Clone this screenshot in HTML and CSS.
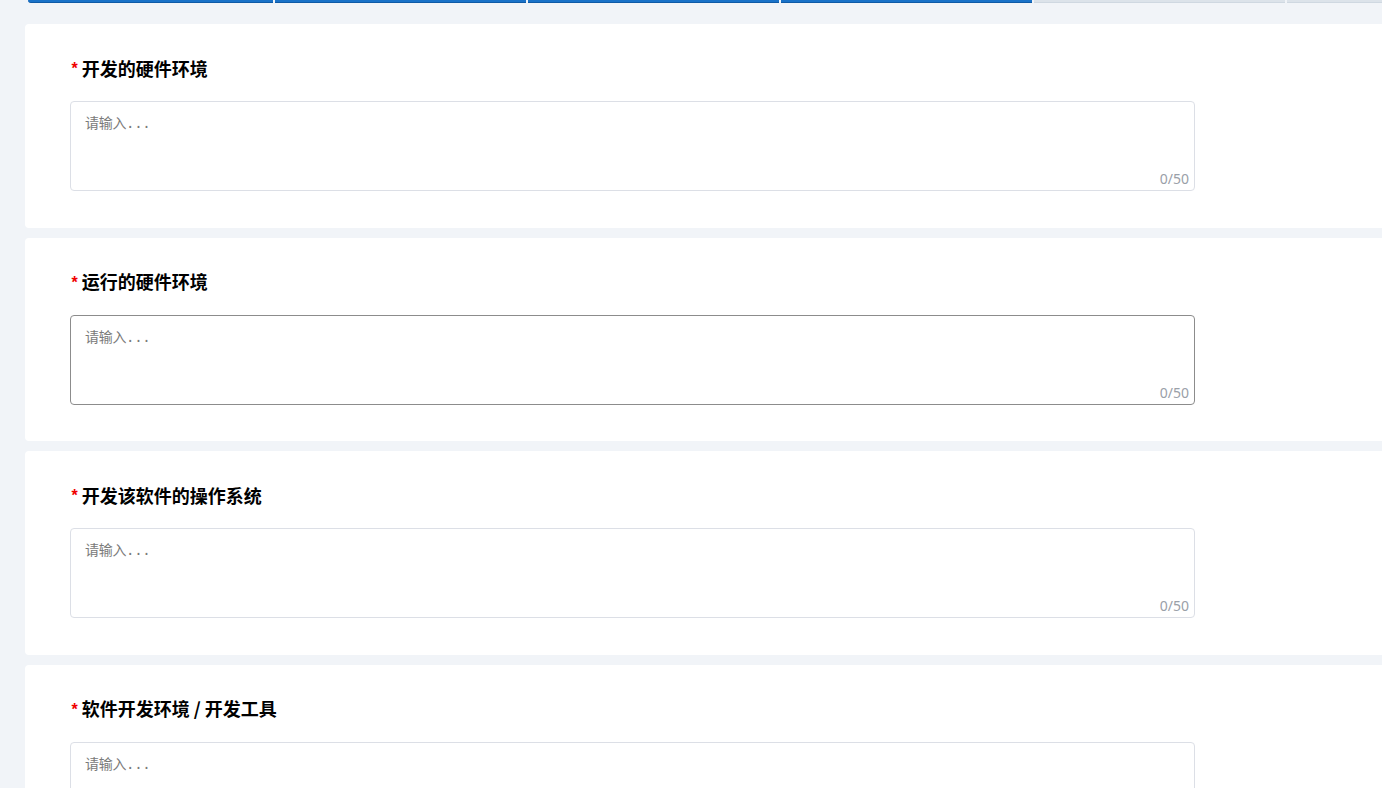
FILE: index.html
```html
<!DOCTYPE html>
<html lang="zh-CN">
<head>
<meta charset="utf-8">
<title>软件环境</title>
<link rel="stylesheet" href="styles.css">
</head>
<body>
<div class="page">
  <div class="steps">
    <div class="step done first"></div>
    <div class="step done"></div>
    <div class="step done"></div>
    <div class="step done"></div>
    <div class="step"></div>
    <div class="step"></div>
  </div>

  <section class="card">
    <div class="label"><span class="req">*</span>开发的硬件环境</div>
    <div class="field">
      <textarea class="input" placeholder="请输入..."></textarea>
      <span class="count">0/50</span>
    </div>
  </section>

  <section class="card">
    <div class="label"><span class="req">*</span>运行的硬件环境</div>
    <div class="field">
      <textarea class="input hover" placeholder="请输入..."></textarea>
      <span class="count">0/50</span>
    </div>
  </section>

  <section class="card">
    <div class="label"><span class="req">*</span>开发该软件的操作系统</div>
    <div class="field">
      <textarea class="input" placeholder="请输入..."></textarea>
      <span class="count">0/50</span>
    </div>
  </section>

  <section class="card">
    <div class="label"><span class="req">*</span>软件开发环境 / 开发工具</div>
    <div class="field">
      <textarea class="input" placeholder="请输入..."></textarea>
      <span class="count">0/50</span>
    </div>
  </section>
</div>
</body>
</html>
```

FILE: styles.css
```css
html, body {
  margin: 0;
  padding: 0;
  background: #f1f4f8;
  overflow: hidden;
  height: 788px;
}

.page {
  padding-left: 25px;
  font-family: "Noto Sans CJK SC", "Noto Sans", sans-serif;
}

.steps {
  display: flex;
  gap: 2px;
  height: 3px;
  margin-bottom: 21px;
  padding-left: 3px;
}

.step {
  flex: 0 0 251px;
  background: #dce3ea;
  border-bottom: 1px solid #cfd8e1;
  box-sizing: border-box;
}

.step.first {
  flex-basis: 245px;
  border-radius: 0 0 0 3px;
}

.step.done {
  background: #1a72c8;
  border-bottom: 1px solid #0f5aa6;
}

.card {
  background: #ffffff;
  border-radius: 4px 0 0 4px;
  padding: 30.5px 0 37px 45px;
  margin-bottom: 10px;
  height: 136px;
}

.label {
  font-size: 18px;
  font-weight: 700;
  color: #000000;
  line-height: 26px;
  height: 26px;
  margin-bottom: 20.5px;
  display: flex;
  align-items: center;
}

.req {
  color: #f00000;
  font-size: 16px;
  font-weight: 700;
  margin: 3px 4px 0 1.5px;
  font-family: "Liberation Sans", sans-serif;
}

.field {
  position: relative;
  width: 1125px;
  height: 90px;
}

.input {
  display: block;
  width: 100%;
  height: 100%;
  box-sizing: border-box;
  border: 1px solid #dcdfe6;
  border-radius: 4px;
  padding: 10px 14px;
  resize: none;
  font-family: "DejaVu Sans Mono", "Noto Sans CJK SC", monospace;
  font-size: 14px;
  letter-spacing: -0.3px;
  line-height: 22px;
  color: #333;
  background: #fff;
  outline: none;
}

.input.hover {
  border-color: #8c8c8c;
}

.input::placeholder {
  color: #7a7a7a;
}

.count {
  position: absolute;
  right: 6px;
  bottom: 3px;
  font-size: 14px;
  line-height: 18px;
  color: #9aa0a8;
  font-family: "Noto Sans", sans-serif;
}
```
